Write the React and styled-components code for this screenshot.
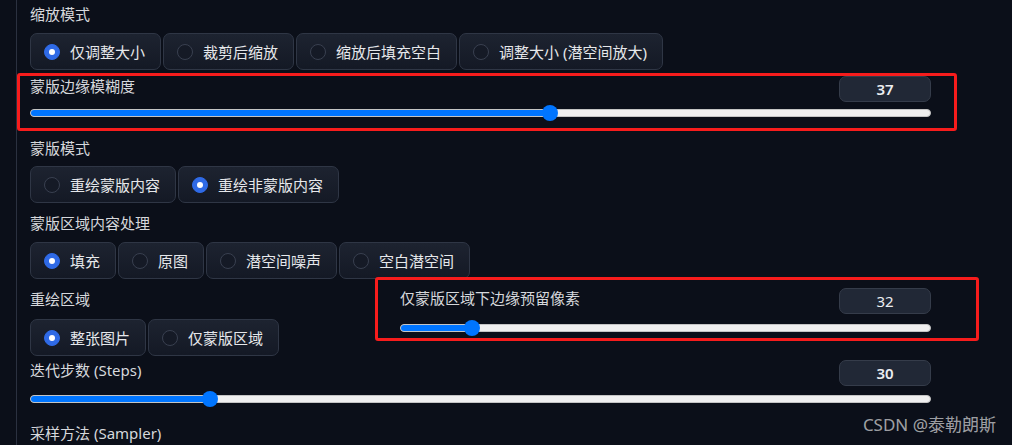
import styled, { createGlobalStyle } from "styled-components";

const GlobalStyle = createGlobalStyle`
  html, body {
    margin: 0;
    background: #0b0f19;
  }
  body {
    font-family: "Noto Sans", "Noto Sans CJK SC", sans-serif;
  }
  * {
    box-sizing: border-box;
  }
`;

const options = {
  resize: ["仅调整大小", "裁剪后缩放", "缩放后填充空白", "调整大小 (潜空间放大)"],
  maskMode: ["重绘蒙版内容", "重绘非蒙版内容"],
  fill: ["填充", "原图", "潜空间噪声", "空白潜空间"],
  area: ["整张图片", "仅蒙版区域"],
};

const RadioRow = ({ items, selected, mt }) => (
  <Group $mt={mt}>
    {items.map((item, i) => (
      <Option key={item}>
        <Dot $on={i === selected} />
        <span>{item}</span>
      </Option>
    ))}
  </Group>
);

const Slider = ({ label, value, min, max, mt, gap, bold = true, box }) => {
  const pct = (value - min) / (max - min);
  return (
    <SliderBlock $mt={mt}>
      <SliderHead>
        <Label>{label}</Label>
        <NumberBox $bold={bold}>{value}</NumberBox>
      </SliderHead>
      <TrackArea $gap={gap}>
        <Rail>
          <Fill style={{ width: `calc(8px + (100% - 16px) * ${pct})` }} />
        </Rail>
        <Thumb style={{ left: `calc((100% - 16px) * ${pct})` }} />
      </TrackArea>
      {box && <Highlight $box={box} />}
    </SliderBlock>
  );
};

export default function App() {
  return (
    <Page>
      <GlobalStyle />
      <Panel>
        <Label>缩放模式</Label>
        <RadioRow items={options.resize} selected={0} mt={9} />

        <Slider
          label="蒙版边缘模糊度"
          value={37}
          min={0}
          max={64}
          mt={6}
          gap={3}
          box={{ top: -3, right: -26, bottom: -10, left: -13 }}
        />

        <Label $mt={17}>蒙版模式</Label>
        <RadioRow items={options.maskMode} selected={1} mt={8} />

        <Label $mt={10}>蒙版区域内容处理</Label>
        <RadioRow items={options.fill} selected={0} mt={9} />

        <Columns>
          <Column>
            <Label $mt={1}>重绘区域</Label>
            <RadioRow items={options.area} selected={0} mt={10} />
          </Column>
          <Column>
            <Slider
              label="仅蒙版区域下边缘预留像素"
              value={32}
              min={0}
              max={256}
              gap={6}
              bold={false}
              box={{ top: -11, right: -48, bottom: -5, left: -25 }}
            />
          </Column>
        </Columns>

        <Slider label="迭代步数 (Steps)" value={30} min={1} max={150} mt={4} gap={5} />

        <Label $mt={16}>采样方法 (Sampler)</Label>
      </Panel>
      <Watermark>CSDN @泰勒朗斯</Watermark>
    </Page>
  );
}

const Page = styled.div`
  position: relative;
  width: 1012px;
  height: 445px;
  overflow: hidden;
  padding-left: 16px;
  background: #0b0f19;
`;

const Panel = styled.div`
  width: 915px;
  height: 100%;
  padding: 4px 0 0 13px;
  border-left: 1px solid #2b3140;
  display: flex;
  flex-direction: column;
`;

const Label = styled.div`
  margin-top: ${(p) => p.$mt || 0}px;
  font-size: 15px;
  line-height: 20px;
  color: #d6d8dc;
  white-space: nowrap;
`;

const Group = styled.div`
  margin-top: ${(p) => p.$mt || 0}px;
  display: flex;
  gap: 2px;
`;

const Option = styled.div`
  height: 37px;
  display: flex;
  align-items: center;
  gap: 10px;
  padding: 0 15px 0 13px;
  border: 1px solid #2f3645;
  border-radius: 7px;
  background: linear-gradient(to top, #141925, #1d2330);
  font-size: 15px;
  color: #e6e8eb;
  white-space: nowrap;
`;

const Dot = styled.span`
  width: 16px;
  height: 16px;
  border-radius: 50%;
  flex-shrink: 0;
  background: ${(p) => (p.$on ? "#2f6ae6" : "#151a26")};
  border: 1px solid ${(p) => (p.$on ? "#2f6ae6" : "#394050")};
  display: flex;
  align-items: center;
  justify-content: center;

  &::after {
    content: "";
    width: 6px;
    height: 6px;
    border-radius: 50%;
    background: #ffffff;
    display: ${(p) => (p.$on ? "block" : "none")};
  }
`;

const SliderBlock = styled.div`
  position: relative;
  margin-top: ${(p) => p.$mt || 0}px;
`;

const SliderHead = styled.div`
  display: flex;
  justify-content: space-between;
  align-items: flex-start;
  height: 26px;
`;

const NumberBox = styled.div`
  width: 92px;
  height: 26px;
  border: 1px solid #353c4a;
  border-radius: 7px;
  background: #212836;
  color: #eceef1;
  font-size: 15px;
  font-weight: ${(p) => (p.$bold ? 600 : 400)};
  line-height: 24px;
  text-align: center;
`;

const TrackArea = styled.div`
  position: relative;
  height: 16px;
  margin-top: ${(p) => p.$gap}px;
  display: flex;
  align-items: center;
`;

const Rail = styled.div`
  position: relative;
  width: 100%;
  height: 8px;
  border-radius: 4px;
  background: #efefef;
  border: 1px solid #c4c4c4;
  overflow: hidden;
`;

const Fill = styled.div`
  position: absolute;
  left: -1px;
  top: -1px;
  bottom: -1px;
  background: #0075ff;
`;

const Thumb = styled.div`
  position: absolute;
  top: 0;
  width: 16px;
  height: 16px;
  border-radius: 50%;
  background: #0075ff;
`;

const Highlight = styled.div`
  position: absolute;
  top: ${(p) => p.$box.top}px;
  right: ${(p) => p.$box.right}px;
  bottom: ${(p) => p.$box.bottom}px;
  left: ${(p) => p.$box.left}px;
  border: 3px solid #f71c1c;
  border-radius: 3px;
  pointer-events: none;
`;

const Columns = styled.div`
  margin-top: 9px;
  display: grid;
  grid-template-columns: 354px 531px;
  gap: 16px;
`;

const Column = styled.div`
  display: flex;
  flex-direction: column;
`;

const Watermark = styled.div`
  position: absolute;
  right: 16px;
  top: 414px;
  font-size: 17px;
  line-height: 22px;
  color: rgba(255, 255, 255, 0.62);
  white-space: nowrap;
`;
